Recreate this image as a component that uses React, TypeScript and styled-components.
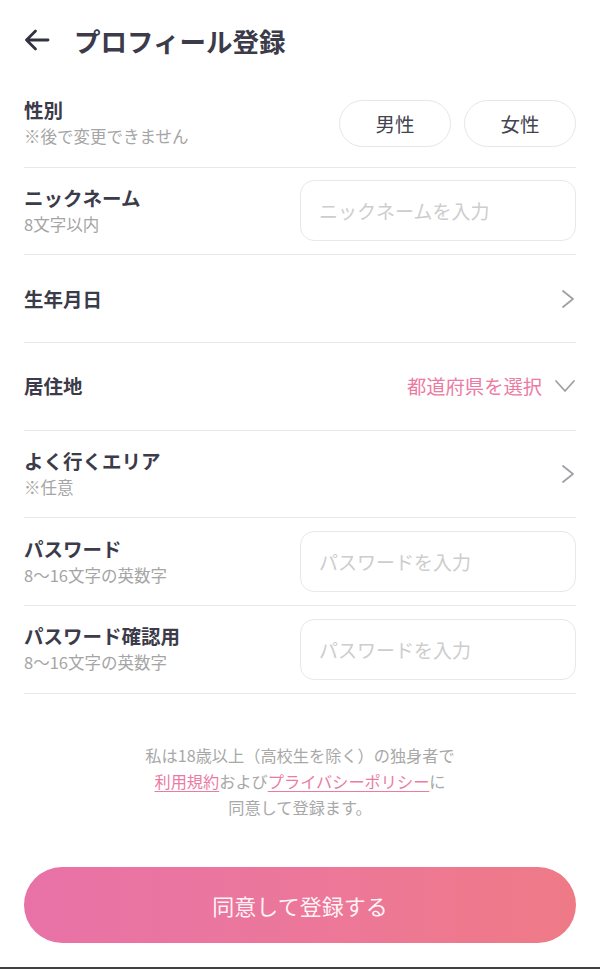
import React from 'react'
import styled, { createGlobalStyle } from 'styled-components'

const GlobalStyle = createGlobalStyle`
  html, body {
    margin: 0;
    padding: 0;
    background: #ffffff;
  }
  body {
    font-family: "Noto Sans CJK JP", "Noto Sans", sans-serif;
    -webkit-font-smoothing: antialiased;
  }
`

const Screen = styled.div`
  min-height: 969px;
  display: flex;
  flex-direction: column;
  box-sizing: border-box;
`

const Header = styled.header`
  height: 80px;
  display: flex;
  align-items: center;
  gap: 24px;
  padding: 0 24px;
  box-sizing: border-box;
`

const BackButton = styled.button`
  border: none;
  background: none;
  padding: 0;
  width: 26px;
  height: 26px;
  display: flex;
  align-items: center;
  justify-content: center;
  cursor: pointer;
`

const Title = styled.h1`
  margin: 0;
  font-size: 26.5px;
  font-weight: 700;
  color: #3b3b4a;
`

const Form = styled.div`
  padding: 0 24px;
`

const Row = styled.div`
  height: 87.67px;
  box-sizing: border-box;
  border-bottom: 1.5px solid #e8e8e8;
  display: flex;
  align-items: center;
  justify-content: space-between;
`

const LabelBlock = styled.div`
  display: flex;
  flex-direction: column;
  gap: 1px;
`

const Label = styled.div`
  font-size: 19.5px;
  font-weight: 700;
  color: #3b3b4a;
  line-height: 26px;
`

const Note = styled.div`
  font-size: 16.5px;
  color: #a5a5a5;
  line-height: 25px;
`

const PillGroup = styled.div`
  display: flex;
  gap: 13px;
`

const Pill = styled.button`
  width: 112px;
  height: 47px;
  border-radius: 24px;
  border: 1.5px solid #e6e6e6;
  background: #fff;
  font-family: inherit;
  font-size: 19.5px;
  color: #444450;
  cursor: pointer;
`

const TextInput = styled.input`
  width: 276px;
  height: 61px;
  box-sizing: border-box;
  border: 1.5px solid #e8e8e8;
  border-radius: 14px;
  padding: 0 18px;
  font-family: inherit;
  font-size: 19px;
  color: #333;
  outline: none;
  &::placeholder {
    color: #cdcdcd;
  }
`

const Picker = styled.div`
  display: flex;
  align-items: center;
  gap: 12px;
`

const PickerText = styled.span`
  font-size: 19.3px;
  color: #ec7ba3;
`

const Terms = styled.p`
  margin: 48px 0 0;
  text-align: center;
  font-size: 16.2px;
  line-height: 26px;
  color: #a8a8a8;
`

const TermsLink = styled.a`
  color: #ec7ba3;
  text-decoration: underline;
  text-underline-offset: 3px;
`

const SubmitWrap = styled.div`
  padding: 0 24px;
  margin-top: 47px;
`

const SubmitButton = styled.button`
  width: 100%;
  height: 76px;
  border: none;
  border-radius: 38px;
  background: linear-gradient(90deg, #e872a7 0%, #ec779b 50%, #ef7a86 100%);
  font-family: inherit;
  font-size: 22px;
  color: rgba(255, 255, 255, 0.93);
  cursor: pointer;
`

const Spacer = styled.div`
  flex: 1;
`

const BottomEdge = styled.div`
  height: 2px;
  background: #404040;
`

const ChevronRight = () => (
  <svg width="16" height="20" viewBox="0 0 16 20" fill="none">
    <path d="M3 2 L13 10 L3 18" stroke="#a0a0a5" strokeWidth="1.8" strokeLinecap="round" strokeLinejoin="round" />
  </svg>
)

const ChevronDown = () => (
  <svg width="22" height="14" viewBox="0 0 22 14" fill="none">
    <path d="M2 2 L11 12 L20 2" stroke="#a0a0a5" strokeWidth="1.8" strokeLinecap="round" strokeLinejoin="round" />
  </svg>
)

const BackArrow = () => (
  <svg width="26" height="22" viewBox="0 0 26 22" fill="none">
    <path d="M24 11 H2.5 M11.5 2 L2.5 11 L11.5 20" stroke="#333340" strokeWidth="2.8" strokeLinecap="round" strokeLinejoin="round" />
  </svg>
)

const App = () => {
  return (
    <Screen>
      <GlobalStyle />
      <Header>
        <BackButton aria-label="戻る"><BackArrow /></BackButton>
        <Title>プロフィール登録</Title>
      </Header>

      <Form>
        <Row>
          <LabelBlock>
            <Label>性別</Label>
            <Note>※後で変更できません</Note>
          </LabelBlock>
          <PillGroup>
            <Pill>男性</Pill>
            <Pill>女性</Pill>
          </PillGroup>
        </Row>

        <Row>
          <LabelBlock>
            <Label>ニックネーム</Label>
            <Note>8文字以内</Note>
          </LabelBlock>
          <TextInput placeholder="ニックネームを入力" />
        </Row>

        <Row>
          <Label>生年月日</Label>
          <ChevronRight />
        </Row>

        <Row>
          <Label>居住地</Label>
          <Picker>
            <PickerText>都道府県を選択</PickerText>
            <ChevronDown />
          </Picker>
        </Row>

        <Row>
          <LabelBlock>
            <Label>よく行くエリア</Label>
            <Note>※任意</Note>
          </LabelBlock>
          <ChevronRight />
        </Row>

        <Row>
          <LabelBlock>
            <Label>パスワード</Label>
            <Note>8〜16文字の英数字</Note>
          </LabelBlock>
          <TextInput type="password" placeholder="パスワードを入力" />
        </Row>

        <Row>
          <LabelBlock>
            <Label>パスワード確認用</Label>
            <Note>8〜16文字の英数字</Note>
          </LabelBlock>
          <TextInput type="password" placeholder="パスワードを入力" />
        </Row>
      </Form>

      <Terms>
        私は18歳以上（高校生を除く）の独身者で<br />
        <TermsLink href="#">利用規約</TermsLink>および<TermsLink href="#">プライバシーポリシー</TermsLink>に<br />
        同意して登録ます。
      </Terms>

      <SubmitWrap>
        <SubmitButton>同意して登録する</SubmitButton>
      </SubmitWrap>

      <Spacer />
      <BottomEdge />
    </Screen>
  )
}

export default App
